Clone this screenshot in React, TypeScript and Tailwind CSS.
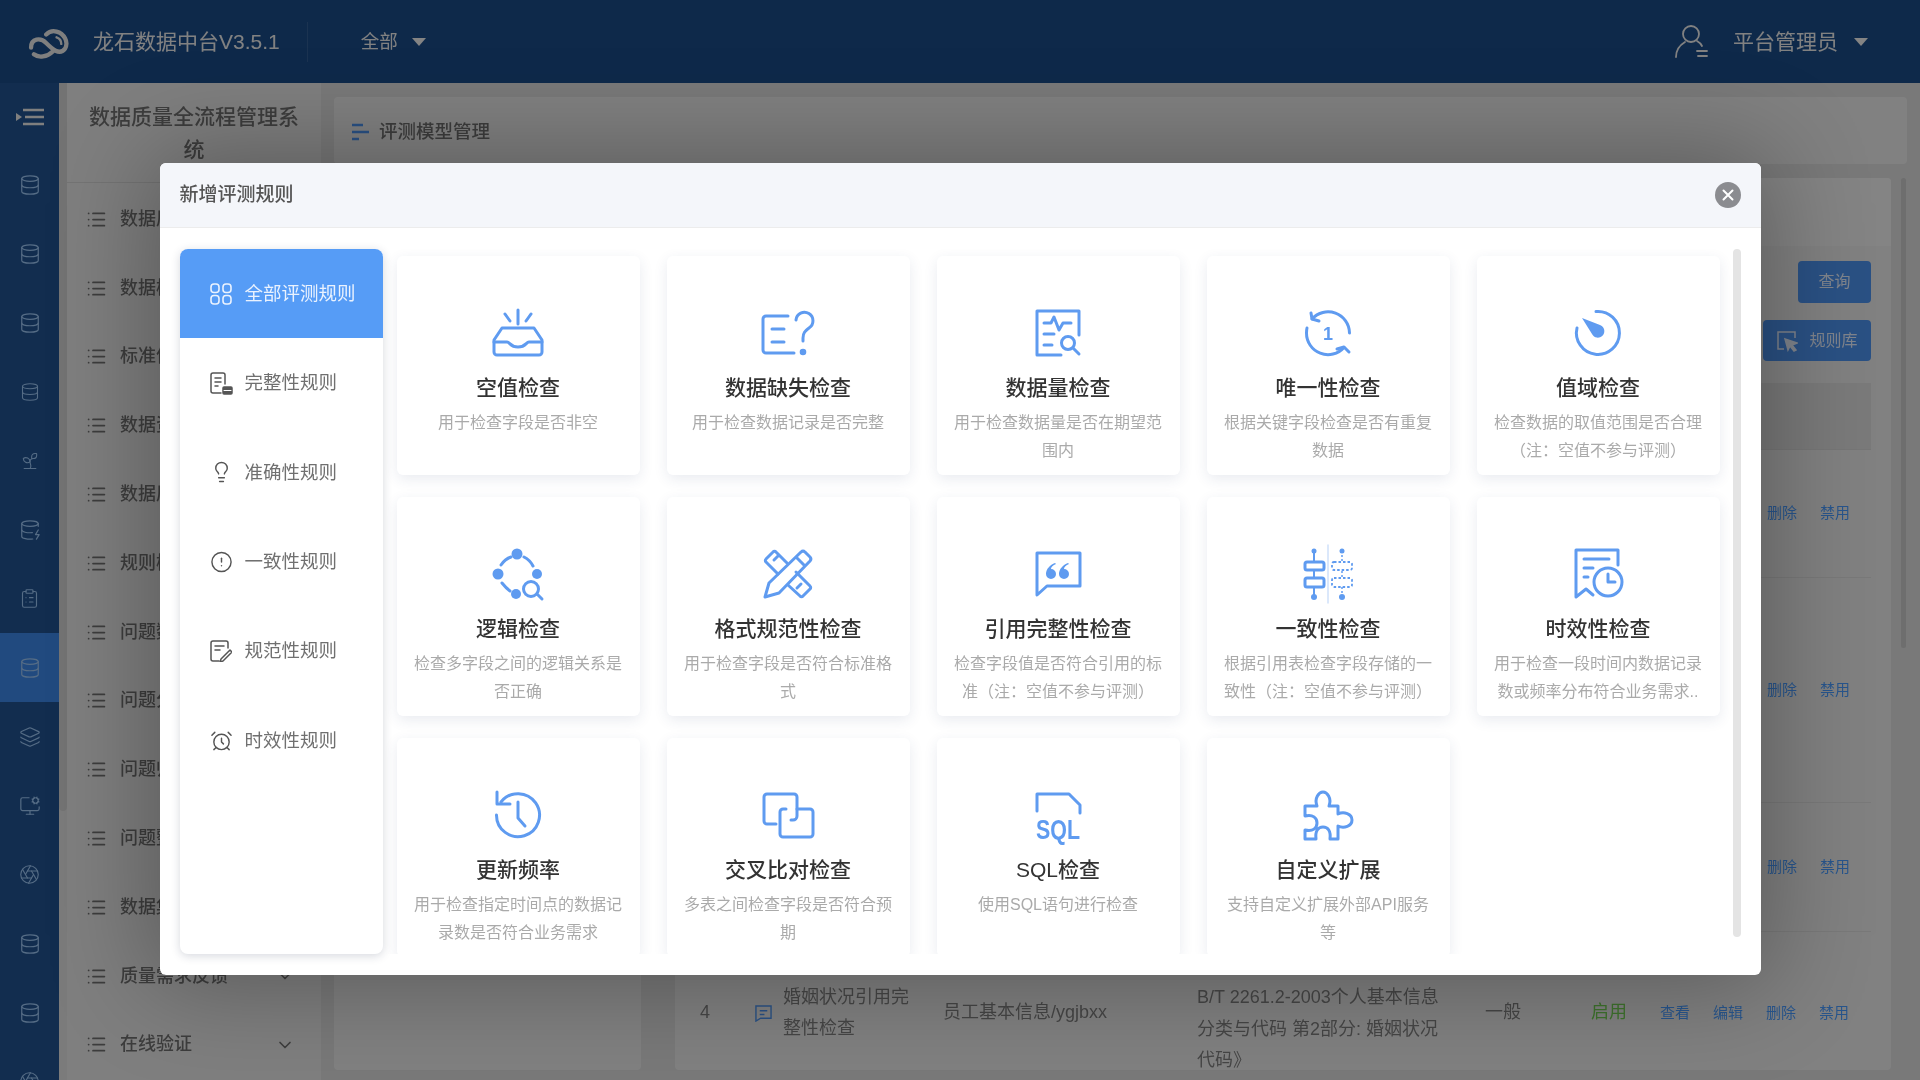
import type { ReactNode } from "react";
import {
  AlarmClock,
  Aperture,
  ChevronDown,
  CircleAlert,
  ClipboardList,
  Database,
  DatabaseZap,
  Layers,
  Lightbulb,
  List,
  MonitorCog,
  Sprout,
} from "lucide-react";

const BLUE = "#5f9bf0";

function Glyph({ children }: { children: ReactNode }) {
  return (
    <svg
      viewBox="0 0 54 54"
      className="w-[54px] h-[54px] overflow-visible"
      fill="none"
      stroke={BLUE}
      strokeWidth={3}
      strokeLinecap="round"
      strokeLinejoin="round"
    >
      {children}
    </svg>
  );
}

const cards: { title: string; desc: string; icon: ReactNode }[] = [
  {
    title: "空值检查",
    desc: "用于检查字段是否非空",
    icon: (
      <Glyph>
        <path d="M11 22h32l8 12v12a3 3 0 0 1-3 3H6a3 3 0 0 1-3-3V34z" />
        <path d="M3 36h13c3 0 3 5 11 5s8-5 11-5h13" />
        <path d="M27 4v14M14 8l5 7M40 8l-5 7" />
      </Glyph>
    ),
  },
  {
    title: "数据缺失检查",
    desc: "用于检查数据记录是否完整",
    icon: (
      <Glyph>
        <path d="M27 10H5a3 3 0 0 0-3 3v31a3 3 0 0 0 3 3h28" />
        <path d="M11 23h12M11 36h12" />
        <path d="M35 14a8.500 8.500 0 1 1 13 8c-4 3-6 5-6 10v3" />
        <circle cx="42" cy="46" r="1.800" fill={BLUE} />
      </Glyph>
    ),
  },
  {
    title: "数据量检查",
    desc: "用于检查数据量是否在期望范围内",
    icon: (
      <Glyph>
        <path d="M48 29V5H6v44h24" />
        <path d="M13 17h7l3-6 5 13 4-7h8M13 28h10M13 39h8" />
        <circle cx="37" cy="37" r="6.500" />
        <path d="M42 42l6 6" />
      </Glyph>
    ),
  },
  {
    title: "唯一性检查",
    desc: "根据关键字段检查是否有重复数据",
    icon: (
      <Glyph>
        <path d="M11 13A21.500 21.500 0 0 1 48.500 27" />
        <path d="M43 41.500A21.500 21.500 0 0 1 5.500 27c0-2 0-3 .5-5" />
        <path d="M10 7l1 6 7 2M48 46l-5-5-7 2" />
        <text x="27" y="34" fontSize="18" fontWeight="700" textAnchor="middle" fill={BLUE} stroke="none" fontFamily="Liberation Sans">
          1
        </text>
      </Glyph>
    ),
  },
  {
    title: "值域检查",
    desc: "检查数据的取值范围是否合理（注：空值不参与评测）",
    icon: (
      <Glyph>
        <path d="M25 5.500A21.500 21.500 0 1 1 6 22" />
        <path d="M11 12l18 7a6.500 6.500 0 1 1-8 9z" fill={BLUE} stroke="none" />
      </Glyph>
    ),
  },
  {
    title: "逻辑检查",
    desc: "检查多字段之间的逻辑关系是否正确",
    icon: (
      <Glyph>
        <path d="M10 18q4-6 10-8M33 10q6 3 9 9M11 36q4 5 8 8" />
        <g fill={BLUE} stroke="none">
          <circle cx="26" cy="7" r="5.500" />
          <circle cx="7" cy="27" r="5.500" />
          <circle cx="46" cy="27" r="5" />
          <circle cx="25" cy="47" r="5" />
        </g>
        <circle cx="40" cy="42" r="7.500" />
        <path d="M46 47l5 5" />
      </Glyph>
    ),
  },
  {
    title: "格式规范性检查",
    desc: "用于检查字段是否符合标准格式",
    icon: (
      <Glyph>
        <path d="M17 27L5 15a2 2 0 0 1 0-3l7-7a2 2 0 0 1 3 0l11 11M35 25l14 14a2 2 0 0 1 0 3l-7 7a2 2 0 0 1-3 0L27 38" />
        <path d="M13 13l4-4M36 41l4-4" />
        <path d="M40 5a3 3 0 0 1 4 0l5 5a3 3 0 0 1 0 4L18 46 4 50l4-14zM35 10l9 9" />
      </Glyph>
    ),
  },
  {
    title: "引用完整性检查",
    desc: "检查字段值是否符合引用的标准（注：空值不参与评测）",
    icon: (
      <Glyph>
        <path d="M6 6h43v33H16L6 48z" />
        <g fill={BLUE} stroke="none">
          <path d="M24 16c-5 2-9 6-9 11a5 5 0 1 0 5-5c0-2 2-4 5-5z" />
          <path d="M37 16c-5 2-9 6-9 11a5 5 0 1 0 5-5c0-2 2-4 5-5z" />
        </g>
      </Glyph>
    ),
  },
  {
    title: "一致性检查",
    desc: "根据引用表检查字段存储的一致性（注：空值不参与评测）",
    icon: (
      <Glyph>
        <path d="M27 -2v58" stroke="#cfe0fa" strokeWidth={1.500} />
        <path d="M13 4v11M13 23v8M13 40v10" strokeWidth={2} />
        <rect x="4" y="15" width="19" height="8" rx="2" />
        <rect x="4" y="31" width="19" height="9" rx="2" />
        <circle cx="13" cy="4" r="2.500" fill={BLUE} stroke="none" />
        <circle cx="13" cy="50" r="3" fill={BLUE} stroke="none" />
        <path d="M41 4v46" strokeWidth={1.500} strokeDasharray="2 2" strokeLinecap="butt" />
        <rect x="31" y="15" width="20" height="8" rx="2" fill="white" strokeWidth={1.800} strokeDasharray="2.500 2" strokeLinecap="butt" />
        <rect x="31" y="31" width="20" height="9" rx="2" fill="white" strokeWidth={1.800} strokeDasharray="2.500 2" strokeLinecap="butt" />
        <circle cx="41" cy="4" r="2.500" fill={BLUE} stroke="none" />
        <circle cx="41" cy="50" r="3" fill={BLUE} stroke="none" />
      </Glyph>
    ),
  },
  {
    title: "时效性检查",
    desc: "用于检查一段时间内数据记录数或频率分布符合业务需求..",
    icon: (
      <Glyph>
        <path d="M47 18V3H5v47l10-8 7 6" />
        <path d="M13 12h25M13 21h9M13 30h4" />
        <circle cx="37" cy="35" r="14" />
        <path d="M37 27v8h7" />
      </Glyph>
    ),
  },
  {
    title: "更新频率",
    desc: "用于检查指定时间点的数据记录数是否符合业务需求",
    icon: (
      <Glyph>
        <path d="M10 14A21.500 21.500 0 1 1 5.500 27" />
        <path d="M6 4v12h13" />
        <path d="M27 14v16l7 8" />
      </Glyph>
    ),
  },
  {
    title: "交叉比对检查",
    desc: "多表之间检查字段是否符合预期",
    icon: (
      <Glyph>
        <path d="M15 36H6a3 3 0 0 1-3-3V9a3 3 0 0 1 3-3h27a3 3 0 0 1 3 3v19a4 4 0 0 1-4 4h-2" />
        <path d="M36 21h13a3 3 0 0 1 3 3v22a3 3 0 0 1-3 3H22a3 3 0 0 1-3-3V24a3 3 0 0 1 3-3h3" />
      </Glyph>
    ),
  },
  {
    title: "SQL检查",
    desc: "使用SQL语句进行检查",
    icon: (
      <Glyph>
        <path d="M6 23V6h32l11 11v8" />
        <text
          x="27"
          y="51"
          fontSize="27"
          fontWeight="700"
          textAnchor="middle"
          textLength="44"
          lengthAdjust="spacingAndGlyphs"
          fill={BLUE}
          stroke="none"
          fontFamily="Liberation Sans"
        >
          SQL
        </text>
      </Glyph>
    ),
  },
  {
    title: "自定义扩展",
    desc: "支持自定义扩展外部API服务等",
    icon: (
      <Glyph>
        <path d="M4 18h12c-3-8 2-14 6-14s9 6 6 14h9v8c6-3 14 0 14 6s-8 9-14 6v13h-8c1-8-2-12-7-12s-8 4-7 12H4v-9c8 2 12-2 12-7s-4-9-12-7z" />
      </Glyph>
    ),
  },
];

const rules: { label: string; icon: ReactNode }[] = [
  {
    label: "全部评测规则",
    icon: (
      <svg viewBox="0 0 22 22" className="w-[22px] h-[22px]" fill="none" stroke="currentColor" strokeWidth={1.600}>
        <rect x="1" y="1" width="8" height="8.500" rx="3" />
        <rect x="13" y="1" width="8" height="8.500" rx="3" />
        <rect x="1" y="12.500" width="8" height="8.500" rx="3" />
        <rect x="13" y="12.500" width="8" height="8.500" rx="3" />
      </svg>
    ),
  },
  {
    label: "完整性规则",
    icon: (
      <svg viewBox="0 0 23 23" className="w-[23px] h-[23px]" fill="none" stroke="currentColor" strokeWidth={1.500} strokeLinecap="round">
        <path d="M11 21H3a2 2 0 0 1-2-2V3a2 2 0 0 1 2-2h10a2 2 0 0 1 2 2v9" />
        <path d="M5 6h6M5 10h6M5 14h3" />
        <path d="M14 15h7a1 1 0 0 1 1 1v5a1 1 0 0 1-1 1h-7a1 1 0 0 1-1-1v-5a1 1 0 0 1 1-1z" fill="currentColor" />
        <path d="M14 18.500h7" stroke="white" strokeWidth={1} />
      </svg>
    ),
  },
  { label: "准确性规则", icon: <Lightbulb size={28} strokeWidth={1.500} /> },
  { label: "一致性规则", icon: <CircleAlert size={26} strokeWidth={1.500} /> },
  {
    label: "规范性规则",
    icon: (
      <svg viewBox="0 0 22 22" className="w-[22px] h-[22px]" fill="none" stroke="currentColor" strokeWidth={1.500} strokeLinecap="round" strokeLinejoin="round">
        <path d="M18 8V3a2 2 0 0 0-2-2H3a2 2 0 0 0-2 2v16a2 2 0 0 0 2 2h6" />
        <path d="M5 6h9M5 10h5" />
        <path d="M20 10l2 2-9 9-3 1 1-3z" />
      </svg>
    ),
  },
  { label: "时效性规则", icon: <AlarmClock size={26} strokeWidth={1.500} /> },
];

const stripIcons = [
  <Database key="a" size={22} strokeWidth={1.300} />,
  <Database key="b" size={22} strokeWidth={1.300} />,
  <Database key="c" size={22} strokeWidth={1.300} />,
  <Database key="d" size={20} strokeWidth={1.300} />,
  <Sprout key="e" size={20} strokeWidth={1.300} />,
  <DatabaseZap key="f" size={22} strokeWidth={1.300} />,
  <ClipboardList key="g" size={21} strokeWidth={1.300} />,
  <Database key="h" size={22} strokeWidth={1.300} />,
  <Layers key="i" size={22} strokeWidth={1.300} />,
  <MonitorCog key="j" size={22} strokeWidth={1.300} />,
  <Aperture key="k" size={21} strokeWidth={1.300} />,
  <Database key="l" size={22} strokeWidth={1.300} />,
  <Database key="m" size={22} strokeWidth={1.300} />,
  <Aperture key="n" size={21} strokeWidth={1.300} />,
];

// the dialog covers most of these, only the first characters stay visible
const navItems = [
  "数据质量",
  "数据模型",
  "标准信息",
  "数据资产",
  "数据质量",
  "规则模板",
  "问题数据",
  "问题分析",
  "问题归类",
  "问题整改",
  "数据集成",
];

const hiddenRows = ["h-[128px]", "h-[225px]", "h-[129px]"];

function Caret({ className }: { className: string }) {
  return <span className={`block w-0 h-0 border-x-[7px] border-x-transparent border-t-[8px] border-t-[#f0f0f0] ${className}`} />;
}

function NavRow({ label, chevron }: { label: string; chevron?: boolean }) {
  return (
    <div className="h-[68.800px] shrink-0 flex items-center pl-[19px] pr-[26px] text-[18px] font-medium">
      <List size={21} strokeWidth={2} />
      <span className={`ml-[13px] whitespace-nowrap overflow-hidden ${chevron ? "flex-1" : "w-[43px]"}`}>{label}</span>
      {chevron && <ChevronDown size={20} />}
    </div>
  );
}

function Background() {
  return (
    <div className="h-full flex flex-col bg-[#e6e7ea]">
      <header className="h-[83px] shrink-0 flex items-center bg-[#1b4c88] text-[#ececec]">
        <svg viewBox="0 0 44 36" className="ml-[28px] w-[42px] h-[34px]" fill="none" stroke="#e8e8e8" strokeWidth={4.500} strokeLinecap="round">
          <path d="M3 24C3 14 13 13 19 19s14 14 20 6c4-7-1-16-9-18-4-1-8 0-11 3" />
          <path d="M6 31c5 4 14 3 20-3" />
          <path d="M30 13c3 1 5 4 5 7" strokeWidth={2.500} />
        </svg>
        <span className="ml-[23px] text-[21px]">龙石数据中台V3.5.1</span>
        <span className="ml-[27px] w-px h-[40px] bg-white/10" />
        <span className="ml-[53px] text-[18.500px]">全部</span>
        <Caret className="ml-[14px]" />
        <svg viewBox="0 0 33 33" className="ml-auto w-[33px] h-[33px]" fill="none" stroke="currentColor" strokeWidth={1.800} strokeLinecap="round">
          <circle cx="16" cy="9" r="8" />
          <path d="M1 32c0-7 4-12 9-15M22 16c2 1 4 3 5 5M22 26h10M23 31h9" />
        </svg>
        <span className="ml-[25px] text-[21px]">平台管理员</span>
        <Caret className="ml-[16px] mr-[52px]" />
      </header>

      <div className="flex-1 flex min-h-0">
        <aside className="w-[59px] shrink-0 flex flex-col bg-[#215391] text-[#9cc5f2] overflow-hidden">
          <div className="h-[67px] shrink-0 flex items-center justify-center text-[#e8e8e8]">
            <svg viewBox="0 0 28 18" className="w-[28px] h-[18px]" fill="none" stroke="currentColor" strokeWidth={2.400}>
              <path d="M0 5l6 4-6 4z" fill="currentColor" stroke="none" />
              <path d="M7 2h21M9 9h19M7 16h21" />
            </svg>
          </div>
          {stripIcons.map((icon, i) => (
            <div
              key={i}
              className={`h-[69px] shrink-0 flex items-center justify-center ${i === 7 ? "bg-[#3c87e8]" : ""}`}
            >
              {icon}
            </div>
          ))}
        </aside>

        <div className="w-[8px] shrink-0 bg-[#e0e0e0]">
          <div className="h-[728px] bg-[#d2d2d2] rounded-b" />
        </div>

        <nav className="w-[254px] shrink-0 bg-[#e8e8e8] flex flex-col text-[#707070]">
          <div className="h-[100px] shrink-0 border-b border-[#d4d4d4] px-[12px] pt-[17px] text-center text-[21px] leading-[33px] font-medium">
            数据质量全流程管理系统
          </div>
          <div className="pt-[2px] flex flex-col">
            {navItems.map((item, i) => (
              <NavRow key={i} label={item} />
            ))}
            <NavRow label="质量需求反馈" chevron />
            <NavRow label="在线验证" chevron />
          </div>
        </nav>

        <main className="flex-1 min-w-0 pl-[13px] pr-[13px] pt-[14px] pb-[10px] flex flex-col bg-[#dcdcdc]">
          <div className="h-[67px] shrink-0 flex items-center pl-[18px] pt-[3px] rounded bg-[#ececec] text-[#707070]">
            <svg viewBox="0 0 18 18" className="w-[18px] h-[18px]" fill="none" stroke="#4d94f0" strokeWidth={2.500}>
              <path d="M0 2h11M0 9h17M0 16h7" />
            </svg>
            <span className="ml-[9px] text-[18.500px] font-medium">评测模型管理</span>
          </div>

          <div className="mt-[14px] flex-1 min-h-0 flex">
            <div className="w-[307px] shrink-0 bg-[#ececec] rounded" />
            <div className="ml-[34px] w-[1216px] shrink-0 bg-[#ececec] rounded overflow-hidden">
              <div className="h-[68px] bg-[#f0f0f0]" />
              <div className="pr-[20px] flex flex-col items-end">
                <button className="mt-[15px] w-[73px] h-[42px] rounded bg-[#4d94f0] text-[16px] text-[#e8f0ff]">查询</button>
                <button className="mt-[17px] w-[108px] h-[41px] rounded bg-[#4d94f0] text-[16px] text-[#e8f0ff] flex items-center justify-center gap-[11px]">
                  <svg viewBox="0 0 22 22" className="w-[22px] h-[22px]" fill="none" stroke="currentColor" strokeWidth={1.500}>
                    <path d="M19 8V2H2v17h6" />
                    <path d="M9 9l12 4-5 2 4 5-2 1-4-5-2 4z" fill="currentColor" />
                  </svg>
                  规则库
                </button>
              </div>
              <div className="ml-[3px] mr-[20px] mt-[22px]">
                <div className="h-[67px] bg-[#dedede] border-b border-[#d8d8d8]" />
                {hiddenRows.map((height) => (
                  <div
                    key={height}
                    className={`${height} flex items-center justify-end gap-[23px] pr-[21px] border-b border-[#dcdcdc] text-[15px] text-[#4a9cff]`}
                  >
                    <span>删除</span>
                    <span>禁用</span>
                  </div>
                ))}
                <div className="h-[162px] flex items-center text-[18px] leading-[31.500px] text-[#808080]">
                  <div className="w-[54px] text-center">4</div>
                  <svg viewBox="0 0 18 18" className="ml-[23px] w-[17px] h-[17px]" fill="none" stroke="#4d94f0" strokeWidth={1.500}>
                    <path d="M1 1h16v13H6l-5 3z" />
                    <path d="M5 6h8M5 10h5" />
                  </svg>
                  <div className="ml-[11px] w-[160px] pr-[30px]">婚姻状况引用完整性检查</div>
                  <div className="w-[254px]">员工基本信息/ygjbxx</div>
                  <div className="w-[288px] pr-[34px] self-start pt-[50px]">B/T 2261.2-2003个人基本信息分类与代码 第2部分: 婚姻状况代码》</div>
                  <div className="w-[106px]">一般</div>
                  <div className="w-[69px] text-[#72cf52]">启用</div>
                  <div className="shrink-0 flex gap-[23px] text-[15px] text-[#4a9cff] whitespace-nowrap">
                    <span>查看</span>
                    <span>编辑</span>
                    <span>删除</span>
                    <span>禁用</span>
                  </div>
                </div>
              </div>
            </div>
            <div className="ml-[10px] w-[5px] h-[470px] bg-[#c8c8c8] rounded" />
          </div>
        </main>
      </div>
    </div>
  );
}

function RuleCard({ title, desc, icon }: { title: string; desc: string; icon: ReactNode }) {
  return (
    <div className="h-[219px] rounded-md bg-white pt-[50px] px-[17px] flex flex-col items-center shadow-[0_4px_14px_rgba(40,60,110,0.1)]">
      <div className="h-[54px] flex items-center justify-center">{icon}</div>
      <h3 className="mt-[13px] text-[21px] leading-[30px] font-medium text-[#333]">{title}</h3>
      <p className="mt-[6px] text-center text-[16px] leading-[27.500px] text-[#aaaaaa]">{desc}</p>
    </div>
  );
}

function RuleDialog() {
  return (
    <div className="absolute inset-0 bg-black/45 flex justify-center pt-[163px]">
      <div className="w-[1601px] h-[812px] rounded-md overflow-hidden bg-white shadow-[0_0_100px_10px_rgba(0,0,0,0.3)]">
        <div className="h-[65px] flex items-center justify-between pl-[20px] pr-[20px] bg-[#f4f6fa] border-b border-[#ececec]">
          <span className="text-[19px] font-medium text-[#555]">新增评测规则</span>
          <span className="w-[26px] h-[26px] rounded-full bg-[#8b8c90] flex items-center justify-center">
            <svg viewBox="0 0 12 12" className="w-[12px] h-[12px]" stroke="white" strokeWidth={2} strokeLinecap="round">
              <path d="M1.500 1.500l9 9M10.500 1.500l-9 9" />
            </svg>
          </span>
        </div>
        <div className="h-[747px] pt-[21px] pb-[21px] pl-[20px] flex">
          <div className="w-[203px] shrink-0 rounded-lg bg-white shadow-[0_2px_10px_rgba(30,40,70,0.18)] overflow-hidden">
            {rules.map((rule, i) => (
              <div
                key={rule.label}
                className={`h-[89.400px] flex items-center pl-[30px] gap-[12px] text-[18.500px] ${
                  i === 0 ? "bg-[#569cf6] text-[#eaf2fe]" : "text-[#707070]"
                }`}
              >
                <span className={`w-[23px] flex justify-center ${i === 0 ? "" : "text-[#555]"}`}>{rule.icon}</span>
                {rule.label}
              </div>
            ))}
          </div>
          <div className="w-[1350px] shrink-0 pl-[14px] pr-[13px] pt-[7px] overflow-hidden">
            <div className="grid grid-cols-[repeat(5,243px)] gap-x-[27px] gap-y-[22px]">
              {cards.map((card) => (
                <RuleCard key={card.title} {...card} />
              ))}
            </div>
          </div>
          <div className="w-[8px] h-[688px] rounded bg-[#e4e4e4]" />
        </div>
      </div>
    </div>
  );
}

export default function App() {
  return (
    <div className="relative w-[1920px] h-[1080px] overflow-hidden blur-[0.6px] font-['Liberation_Sans','Noto_Sans_CJK_SC',sans-serif]">
      <Background />
      <RuleDialog />
    </div>
  );
}
